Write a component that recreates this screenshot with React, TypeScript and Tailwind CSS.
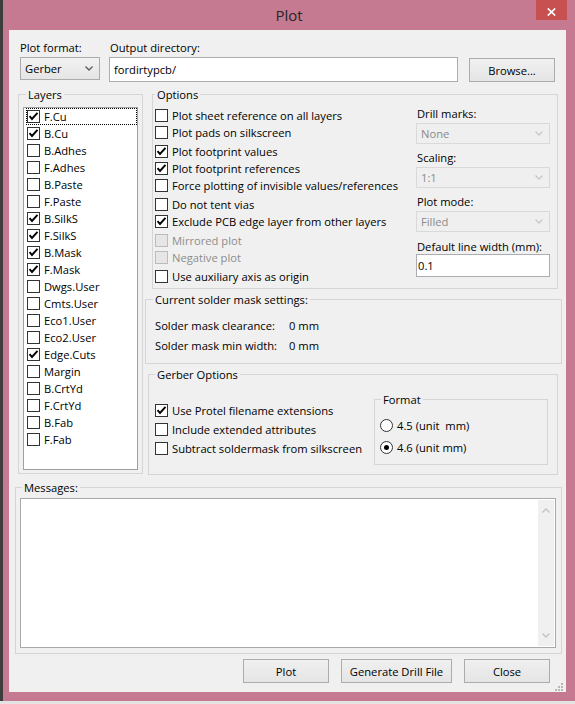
import React from 'react';

function Chevron({ color, up }: { color: string; up?: boolean }) {
  return (
    <svg width="8" height="5" viewBox="0 0 8 5" className="shrink-0">
      <path d={up ? 'M0.5 4.5 L4 1 L7.5 4.5' : 'M0.5 0.5 L4 4 L7.5 0.5'} fill="none" stroke={color} strokeWidth="1.3" />
    </svg>
  );
}

function Check({ checked, disabled }: { checked?: boolean; disabled?: boolean }) {
  return (
    <span
      className={`w-[13px] h-[13px] shrink-0 border flex items-center justify-center ${
        disabled ? 'border-[#bcbcbc] bg-[#e6e6e6]' : 'border-[#333333] bg-white'
      }`}
    >
      {checked && (
        <svg width="11" height="11" viewBox="0 0 11 11">
          <path d="M1.5 5.2 L4 8 L9.5 1.8" fill="none" stroke="#000" strokeWidth="1.9" />
        </svg>
      )}
    </span>
  );
}

function Radio({ selected }: { selected?: boolean }) {
  return (
    <span className="w-[13px] h-[13px] shrink-0 rounded-full border border-[#333333] bg-white flex items-center justify-center">
      {selected && <span className="w-[5px] h-[5px] rounded-full bg-black" />}
    </span>
  );
}

function Combo({ value, disabled, className }: { value: string; disabled?: boolean; className?: string }) {
  return (
    <div
      className={`flex items-center justify-between border pl-[4px] pr-[6px] ${
        disabled
          ? 'border-[#d9d9d9] bg-[#efefef] text-[#8a8a8a]'
          : 'border-[#acacac] bg-linear-to-b from-[#f2f2f2] to-[#e5e5e5] text-black'
      } ${className ?? ''}`}
    >
      <span>{value}</span>
      <Chevron color={disabled ? '#c8c8c8' : '#5a5a5a'} />
    </div>
  );
}

function Btn({ label, className }: { label: string; className?: string }) {
  return (
    <div
      className={`flex items-center justify-center h-[24px] border border-[#acacac] bg-linear-to-b from-[#f0f0f0] to-[#e5e5e5] ${className ?? ''}`}
    >
      {label}
    </div>
  );
}

function Group({
  label,
  labelMl,
  className,
  children,
}: {
  label: string;
  labelMl: string;
  className?: string;
  children?: React.ReactNode;
}) {
  return (
    <div className={`border border-[#d5d5d5] ${className ?? ''}`}>
      <span className={`block w-fit -mt-[8px] px-[2px] bg-[#f0f0f0] leading-[15px] ${labelMl}`}>{label}</span>
      {children}
    </div>
  );
}

const layers: [string, boolean][] = [
  ['F.Cu', true],
  ['B.Cu', true],
  ['B.Adhes', false],
  ['F.Adhes', false],
  ['B.Paste', false],
  ['F.Paste', false],
  ['B.SilkS', true],
  ['F.SilkS', true],
  ['B.Mask', true],
  ['F.Mask', true],
  ['Dwgs.User', false],
  ['Cmts.User', false],
  ['Eco1.User', false],
  ['Eco2.User', false],
  ['Edge.Cuts', true],
  ['Margin', false],
  ['B.CrtYd', false],
  ['F.CrtYd', false],
  ['B.Fab', false],
  ['F.Fab', false],
];

const options: { label: string; checked: boolean; disabled: boolean; mt: string }[] = [
  { label: 'Plot sheet reference on all layers', checked: false, disabled: false, mt: 'mt-[5px]' },
  { label: 'Plot pads on silkscreen', checked: false, disabled: false, mt: '' },
  { label: 'Plot footprint values', checked: true, disabled: false, mt: 'mt-[2px]' },
  { label: 'Plot footprint references', checked: true, disabled: false, mt: '' },
  { label: 'Force plotting of invisible values/references', checked: false, disabled: false, mt: '' },
  { label: 'Do not tent vias', checked: false, disabled: false, mt: 'mt-[2px]' },
  { label: 'Exclude PCB edge layer from other layers', checked: true, disabled: false, mt: '' },
  { label: 'Mirrored plot', checked: false, disabled: true, mt: 'mt-[2px]' },
  { label: 'Negative plot', checked: false, disabled: true, mt: '' },
  { label: 'Use auxiliary axis as origin', checked: false, disabled: false, mt: 'mt-[2px]' },
];

export default function App() {
  return (
    <div className="w-[575px] h-[704px] overflow-hidden flex flex-col bg-[#e4e4e4] font-['Open_Sans',sans-serif]">
      <div className="h-[701px] flex">
        <div className="w-[3px] bg-[#3d3d3d]" />
        <div className="flex-1 bg-[#c57a91] flex flex-col">
          {/* Title bar */}
          <div className="h-[30px] flex items-start">
            <div className="w-[39px]" />
            <div className="flex-1 text-center text-[15px] leading-[30px] text-[#262626]">Plot</div>
            <div className="w-[31px] h-[20px] mr-[8px] bg-[#c75050] flex items-center justify-center pt-[3px]">
              <svg width="9" height="8" viewBox="0 0 9 8">
                <path d="M0.8 0.5 L8.2 7.5 M8.2 0.5 L0.8 7.5" stroke="#fff" strokeWidth="1.7" />
              </svg>
            </div>
          </div>

          {/* Client area */}
          <div className="ml-[6px] mr-[9px] h-[662px] bg-[#f0f0f0] flex flex-col pt-[10px] text-[11.2px] leading-[15px] text-black">
            {/* Top row */}
            <div className="flex items-start">
              <div className="ml-[11px] w-[80px] flex flex-col">
                <span>Plot format:</span>
                <Combo value="Gerber" className="mt-[2px] h-[23px]" />
              </div>
              <div className="ml-[9px] w-[349px] flex flex-col">
                <span className="pl-[1px]">Output directory:</span>
                <div className="mt-[2px] h-[25px] border border-[#abadb3] bg-white flex items-center pl-[4px]">
                  fordirtypcb/
                </div>
              </div>
              <Btn label="Browse..." className="ml-[11px] mt-[18px] w-[86px]" />
            </div>

            {/* Main row */}
            <div className="mt-[12px] flex items-start">
              {/* Layers */}
              <Group label="Layers" labelMl="ml-[7px]" className="ml-[9px] w-[125px] h-[380px]">
                <div className="ml-[4px] mt-[5px] w-[115px] h-[363px] border border-[#a0a0a0] bg-white">
                  {layers.map(([name, on], i) => (
                    <div
                      key={name}
                      className={`ml-[2px] h-[17px] flex items-center border ${
                        i === 0 ? 'border-dotted border-[#000]' : 'border-transparent'
                      }`}
                    >
                      <Check checked={on} />
                      <span className="ml-[4px] whitespace-nowrap">{name}</span>
                    </div>
                  ))}
                </div>
              </Group>

              {/* Right column */}
              <div className="ml-[2px] w-[417px] flex flex-col">
                <Group label="Options" labelMl="ml-[2px]" className="ml-[7px] w-[406px] h-[195px]">
                  <div className="flex items-start">
                    <div className="w-[263px] pl-[2px] flex flex-col">
                      {options.map((o) => (
                        <div key={o.label} className={`h-[17px] flex items-center ${o.mt}`}>
                          <Check checked={o.checked} disabled={o.disabled} />
                          <span className={`ml-[4px] whitespace-nowrap ${o.disabled ? 'text-[#8d8d8d]' : ''}`}>
                            {o.label}
                          </span>
                        </div>
                      ))}
                    </div>
                    <div className="w-[134px] mt-[4px] flex flex-col">
                      <span className="pl-[1px]">Drill marks:</span>
                      <Combo value="None" disabled className="mt-[2px] h-[21px]" />
                      <span className="pl-[1px] mt-[6px]">Scaling:</span>
                      <Combo value="1:1" disabled className="mt-[2px] h-[21px]" />
                      <span className="pl-[1px] mt-[6px]">Plot mode:</span>
                      <Combo value="Filled" disabled className="mt-[2px] h-[21px]" />
                      <span className="pl-[1px] mt-[7px] whitespace-nowrap">Default line width (mm):</span>
                      <div className="h-[23px] border border-[#abadb3] bg-white flex items-center pl-[1px]">0.1</div>
                    </div>
                  </div>
                </Group>

                <Group label="Current solder mask settings:" labelMl="ml-[7px]" className="mt-[10px] w-[417px] h-[65px]">
                  <div className="pl-[9px] mt-[11px] flex">
                    <span className="w-[134px]">Solder mask clearance:</span>
                    <span>0 mm</span>
                  </div>
                  <div className="pl-[9px] mt-[5px] flex">
                    <span className="w-[134px]">Solder mask min width:</span>
                    <span>0 mm</span>
                  </div>
                </Group>

                <Group label="Gerber Options" labelMl="ml-[6px]" className="mt-[10px] ml-[3px] w-[410px] h-[101px]">
                  <div className="flex items-start">
                    <div className="w-[225px] pl-[6px] mt-[20px] flex flex-col">
                      <div className="h-[17px] flex items-center">
                        <Check checked />
                        <span className="ml-[4px] whitespace-nowrap">Use Protel filename extensions</span>
                      </div>
                      <div className="mt-[2px] h-[17px] flex items-center">
                        <Check />
                        <span className="ml-[4px] whitespace-nowrap">Include extended attributes</span>
                      </div>
                      <div className="mt-[2px] h-[17px] flex items-center">
                        <Check />
                        <span className="ml-[4px] whitespace-nowrap">Subtract soldermask from silkscreen</span>
                      </div>
                    </div>
                    <Group label="Format" labelMl="ml-[6px]" className="mt-[17px] w-[174px] h-[66px]">
                      <div className="pl-[5px] mt-[10px] h-[17px] flex items-center">
                        <Radio />
                        <span className="ml-[4px] whitespace-pre">4.5 (unit  mm)</span>
                      </div>
                      <div className="pl-[5px] mt-[5px] h-[17px] flex items-center">
                        <Radio selected />
                        <span className="ml-[4px]">4.6 (unit mm)</span>
                      </div>
                    </Group>
                  </div>
                </Group>
              </div>
            </div>

            {/* Messages */}
            <Group label="Messages:" labelMl="ml-[6px]" className="mt-[12px] ml-[6px] w-[547px] h-[167px]">
              <div className="ml-[4px] mt-[3px] w-[536px] h-[150px] border border-[#a9a9a9] bg-white flex justify-end">
                <div className="w-[16px] my-[1px] mr-[1px] bg-[#f0f0f0] flex flex-col items-center justify-between py-[8px]">
                  <Chevron color="#c2c2c2" up />
                  <Chevron color="#c2c2c2" />
                </div>
              </div>
            </Group>

            {/* Buttons */}
            <div className="mt-[5px] h-[33px] flex items-start">
              <Btn label="Plot" className="ml-[234px] w-[86px]" />
              <Btn label="Generate Drill File" className="ml-[12px] w-[111px]" />
              <Btn label="Close" className="ml-[12px] w-[86px]" />
              <svg width="8" height="8" viewBox="0 0 8 8" className="ml-auto mr-[3px] mb-[1px] self-end">
                <rect x="6" y="0" width="2" height="2" fill="#b8b8b8" />
                <rect x="3" y="3" width="2" height="2" fill="#b8b8b8" />
                <rect x="6" y="3" width="2" height="2" fill="#b8b8b8" />
                <rect x="0" y="6" width="2" height="2" fill="#b8b8b8" />
                <rect x="3" y="6" width="2" height="2" fill="#b8b8b8" />
                <rect x="6" y="6" width="2" height="2" fill="#b8b8b8" />
              </svg>
            </div>
          </div>
        </div>
      </div>
      <div className="h-[3px] bg-[#e4e4e4]" />
    </div>
  );
}
